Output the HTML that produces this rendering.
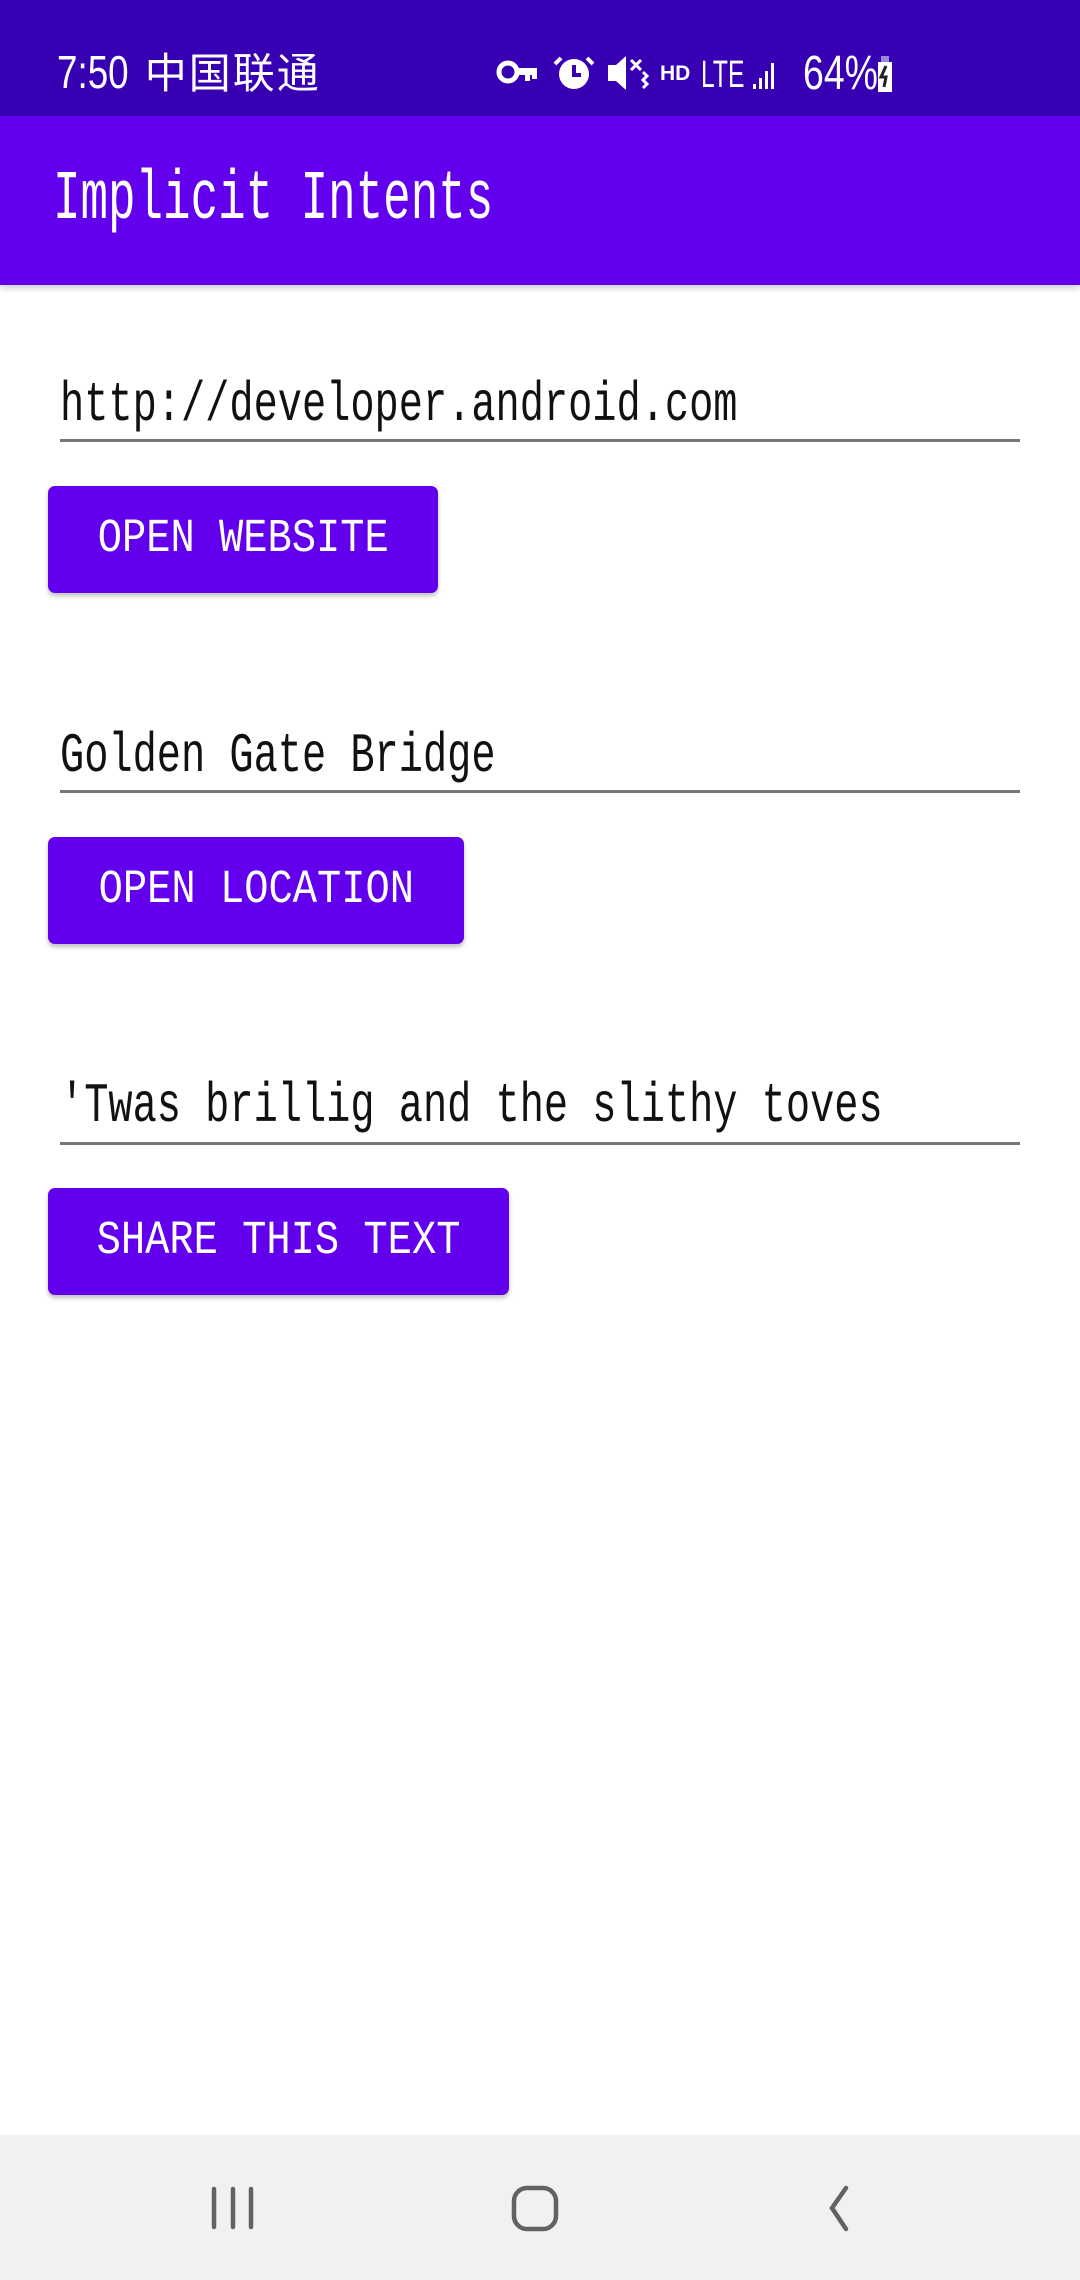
<!DOCTYPE html>
<html><head><meta charset="utf-8"><style>
*{margin:0;padding:0;box-sizing:border-box}
body{width:1080px;height:2280px;background:#fff;position:relative;overflow:hidden;font-family:"Liberation Mono","Noto Sans CJK SC",monospace}
.abs{position:absolute}
.sb{left:0;top:0;width:1080px;height:116px;background:#3700B3}
.ab{left:0;top:116px;width:1080px;height:169px;background:#6200EE;box-shadow:0 3px 6px rgba(0,0,0,.2)}
.t{white-space:nowrap;transform-origin:0 0}
.ed{position:absolute;left:60px;width:960px;height:3px;background:#777}
.btn{position:absolute;left:48px;height:107px;background:#6200EE;border-radius:7px;box-shadow:0 3px 5px rgba(0,0,0,.25);color:#fff;font-size:47px;line-height:107px;text-align:center;overflow:hidden}
.btn span{display:inline-block;transform:scaleX(.86)}
.nav{left:0;top:2135px;width:1080px;height:145px;background:#f1f1f1}
</style></head><body>
<div class="abs sb"></div>
<div class="abs t" style="left:57px;top:44px;color:#fff;font-size:46px;line-height:56px;font-family:'Liberation Sans','Noto Sans CJK SC',sans-serif"><span style="display:inline-block;transform:scaleX(.8);transform-origin:0 0;width:75px">7:50</span> <span style="font-size:42px;letter-spacing:2px">中国联通</span></div>
<!-- status icons -->
<svg class="abs" style="left:495px;top:50px" width="420" height="46" viewBox="0 0 420 46">
 <g fill="#fff">
  <circle cx="13" cy="22" r="9" fill="none" stroke="#fff" stroke-width="5"/>
  <rect x="20" y="18" width="22" height="7"/><rect x="30" y="22" width="5" height="9"/><rect x="37" y="22" width="5" height="7"/>
  <circle cx="79" cy="24" r="15"/><path d="M79 15v10h7" stroke="#3700B3" stroke-width="4" fill="none"/>
  <path d="M66 8l-6 6M92 8l6 6" stroke="#fff" stroke-width="4"/>
  <path d="M113 15h8l10-9v34l-10-9h-8z"/><path d="M136 10l10 10M146 10l-10 10M148 22l4 4-4 4 4 4-4 4" stroke="#fff" stroke-width="3" fill="none"/>
 </g>
 <text x="165" y="30" fill="#fff" font-family="Liberation Sans" font-weight="bold" font-size="21">HD</text>
 <text x="206" y="37" fill="#fff" font-family="Liberation Sans" font-size="38" transform="scale(.65 1)" transform-origin="206 0">LTE</text>
 <g fill="#fff"><rect x="258" y="34" width="3" height="5"/><rect x="264" y="28" width="3" height="11"/><rect x="270" y="21" width="3" height="18"/><rect x="276" y="13" width="3" height="26"/></g>
 <text x="308" y="39" fill="#fff" font-family="Liberation Sans" font-size="48" transform="scale(.78 1)" transform-origin="308 0">64%</text>
 <rect x="383" y="12" width="14" height="30" fill="#fff"/><rect x="386" y="6" width="8" height="6" fill="#9a8ad6"/>
 <path d="M391 16l-5 11h5l-2 10" stroke="#222" stroke-width="3" fill="none"/>
</svg>
<div class="abs ab"></div>
<div class="abs t" style="left:53px;top:160px;color:#fff;font-size:70px;line-height:82px;transform:scaleX(.655)">Implicit Intents</div>

<div class="abs t" style="left:60px;top:370px;color:#111;font-size:56px;line-height:70px;transform:scaleX(.72)">http://developer.android.com</div>
<div class="ed" style="top:439px"></div>
<div class="btn" style="top:486px;width:390px"><span>OPEN WEBSITE</span></div>

<div class="abs t" style="left:60px;top:721px;color:#111;font-size:56px;line-height:70px;transform:scaleX(.72)">Golden Gate Bridge</div>
<div class="ed" style="top:790px"></div>
<div class="btn" style="top:837px;width:416px"><span>OPEN LOCATION</span></div>

<div class="abs t" style="left:60px;top:1071px;color:#111;font-size:56px;line-height:70px;transform:scaleX(.72)">'Twas brillig and the slithy toves</div>
<div class="ed" style="top:1142px"></div>
<div class="btn" style="top:1188px;width:461px"><span>SHARE THIS TEXT</span></div>

<div class="abs nav"></div>
<svg class="abs" style="left:0;top:2135px" width="1080" height="145">
 <g stroke="#626262" stroke-width="4.5" stroke-linecap="round" fill="none">
  <path d="M214 54v38M233 54v38M251 54v38"/>
  <rect x="514" y="53" width="42" height="41" rx="13"/>
  <path d="M846 53l-14 20 14 21"/>
 </g>
</svg>
</body></html>
